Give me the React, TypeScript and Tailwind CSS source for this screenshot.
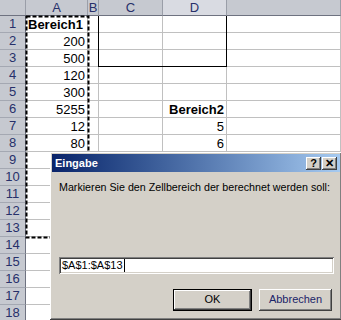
const rows: Record<number, { a?: string; d?: string; boldA?: boolean; boldD?: boolean }> = {
  1: { a: "Bereich1", boldA: true },
  2: { a: "200" },
  3: { a: "500" },
  4: { a: "120" },
  5: { a: "300" },
  6: { a: "5255", d: "Bereich2", boldD: true },
  7: { a: "12", d: "5" },
  8: { a: "80", d: "6" },
};

const raised =
  "shadow-[inset_-1px_-1px_#404040,inset_1px_1px_#ffffff,inset_-2px_-2px_#808080,inset_2px_2px_#d4d0c8]";
const sunken =
  "shadow-[inset_1px_1px_#808080,inset_-1px_-1px_#ffffff,inset_2px_2px_#404040,inset_-2px_-2px_#d4d0c8]";

function ColHeader({ label, active }: { label?: string; active?: boolean }) {
  return (
    <div
      className={`flex items-center justify-center border-r border-b border-r-[#9a9ea8] border-b-[#6e7280] text-[13px] text-[#27306a] ${
        active ? "bg-[#d9dbe2]" : "bg-[#c6c9d0]"
      }`}
    >
      {label}
    </div>
  );
}

function Cell({ children, bold, left }: { children?: string; bold?: boolean; left?: boolean }) {
  return (
    <div
      className={`flex items-center overflow-hidden whitespace-nowrap border-r border-b border-[#c0c0c0] bg-white px-[2px] text-[13px] leading-none text-black ${
        left ? "justify-start" : "justify-end"
      } ${bold ? "font-bold" : ""}`}
    >
      {children}
    </div>
  );
}

function TitleButton({ children }: { children: string }) {
  return (
    <div
      className={`flex h-[13px] w-[15px] items-center justify-center bg-[#d4d0c8] text-[11px] font-bold leading-none text-black ${raised}`}
    >
      {children}
    </div>
  );
}

export default function App() {
  const rowNums = Array.from({ length: 18 }, (_, i) => i + 1);
  return (
    <div
      className="relative h-[320px] w-[341px] overflow-hidden bg-white"
      style={{ fontFamily: '"Liberation Sans", Arial, sans-serif' }}
    >
      <div className="grid grid-cols-[26px_62px_11px_64px_64px_1fr] grid-rows-[16px_repeat(18,17px)]">
        <div className="border-r border-b border-r-[#9a9ea8] border-b-[#6e7280] bg-[#c6c9d0]" />
        <ColHeader label="A" />
        <ColHeader label="B" />
        <ColHeader label="C" />
        <ColHeader label="D" active />
        <ColHeader />
        {rowNums.map((n) => (
          <div key={n} className="contents">
            <div className="flex items-center justify-center border-r border-b border-r-[#6e7280] border-b-[#a4a8b2] bg-[#c6c9d0] text-[13px] text-[#27306a]">
              {n}
            </div>
            <Cell bold={rows[n]?.boldA} left={rows[n]?.boldA}>
              {rows[n]?.a}
            </Cell>
            <Cell />
            <Cell />
            <Cell bold={rows[n]?.boldD}>{rows[n]?.d}</Cell>
            <Cell />
          </div>
        ))}
      </div>

      {/* border box C1:D3 */}
      <div className="pointer-events-none absolute left-[98px] top-[16px] h-[51px] w-[129px] border border-t-0 border-black" />

      {/* marching ants A1:A13 */}
      <svg className="pointer-events-none absolute left-[25px] top-[15px]" width="66" height="224">
        <rect x="1.5" y="1.5" width="62" height="221" fill="none" stroke="#000" strokeWidth="2" strokeDasharray="4 2" />
      </svg>

      {/* dialog */}
      <div
        className={`absolute left-[50px] top-[152px] flex h-[168px] w-[292px] flex-col bg-[#d4d0c8] p-[2px] ${raised}`}
      >
        <div className="flex h-[18px] items-center justify-between bg-gradient-to-r from-[#0a246a] to-[#a6caf0] pl-[3px] pr-[3px]">
          <span className="text-[11px] font-bold text-white">Eingabe</span>
          <div className="flex gap-[1px]">
            <TitleButton>?</TitleButton>
            <TitleButton>✕</TitleButton>
          </div>
        </div>
        <div className="flex flex-1 flex-col px-[7px]">
          <p className="mt-[10px] whitespace-nowrap text-[10.7px] leading-none text-black">
            Markieren Sie den Zellbereich der berechnet werden soll:
          </p>
          <div className={`mt-[64px] flex h-[17px] w-[275px] items-center bg-white pl-[3px] text-[11px] text-black ${sunken}`}>
            $A$1:$A$13
            <span className="ml-[1px] h-[13px] w-[1px] bg-black" />
          </div>
          <div className="mt-[15px] flex justify-end gap-[7px] pr-[1px]">
            <div className="h-[22px] w-[79px] border border-black">
              <div className={`flex h-full w-full items-center justify-center text-[11px] text-black ${raised}`}>
                OK
              </div>
            </div>
            <div className={`flex h-[22px] w-[73px] items-center justify-center text-[11px] text-[#1b2469] ${raised}`}>
              Abbrechen
            </div>
          </div>
        </div>
      </div>
    </div>
  );
}
